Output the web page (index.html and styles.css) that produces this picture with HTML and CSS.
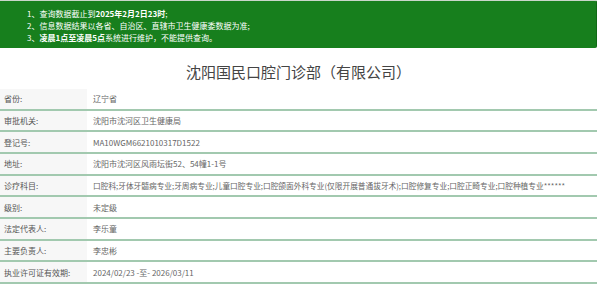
FILE: index.html
```html
<!DOCTYPE html>
<html lang="zh-CN">
<head>
<meta charset="utf-8">
<link rel="stylesheet" href="styles.css">
</head>
<body>
<div class="page">
  <div class="notice">
    <p>1、查询数据截止到<b>2025年2月2日23时</b>;</p>
    <p>2、信息数据结果以各省、自治区、直辖市卫生健康委数据为准;</p>
    <p>3、<b>凌晨1点至凌晨5点</b>系统进行维护，不能提供查询。</p>
  </div>
  <h1 class="title">沈阳国民口腔门诊部（有限公司）</h1>
  <div class="table">
    <div class="row"><div class="label">省份:</div><div class="value">辽宁省</div></div>
    <div class="row"><div class="label">审批机关:</div><div class="value">沈阳市沈河区卫生健康局</div></div>
    <div class="row"><div class="label">登记号:</div><div class="value">MA10WGM6621010317D1522</div></div>
    <div class="row"><div class="label">地址:</div><div class="value">沈阳市沈河区风雨坛街52、54幢1-1号</div></div>
    <div class="row"><div class="label">诊疗科目:</div><div class="value value-long">口腔科;牙体牙髓病专业;牙周病专业;儿童口腔专业;口腔颌面外科专业(仅限开展普通拔牙术);口腔修复专业;口腔正畸专业;口腔种植专业******</div></div>
    <div class="row"><div class="label">级别:</div><div class="value">未定级</div></div>
    <div class="row"><div class="label">法定代表人:</div><div class="value">李乐童</div></div>
    <div class="row"><div class="label">主要负责人:</div><div class="value">李忠彬</div></div>
    <div class="row"><div class="label">执业许可证有效期:</div><div class="value">2024/02/23 -至- 2026/03/11</div></div>
  </div>
</div>
</body>
</html>
```
FILE: styles.css
```css
html, body {
  margin: 0;
  padding: 0;
  background: #ffffff;
}
body {
  font-family: "Noto Sans CJK SC", "Noto Sans", sans-serif;
  color: #555;
}
.page {
  width: 597px;
}
.notice {
  background: #177f1d;
  border-top: 1px solid #c9d6c9;
  border-right: 1px solid #0f6a15;
  border-radius: 0 2px 2px 0;
  height: 48px;
  box-sizing: border-box;
  padding: 7px 0 0 27px;
  color: #ffffff;
}
.notice p {
  margin: 0;
  font-size: 8px;
  line-height: 12px;
  height: 12px;
  white-space: nowrap;
}
.notice b {
  font-weight: 700;
}
.title {
  margin: 0;
  height: 41px;
  box-sizing: border-box;
  padding-top: 14px;
  text-align: center;
  font-size: 15px;
  line-height: 20px;
  font-weight: 400;
  color: #444;
}
.table {
  display: flex;
  flex-direction: column;
}
.row {
  display: grid;
  grid-template-columns: 87px 1fr;
  height: 21.67px;
  box-sizing: border-box;
  border-bottom: 2px solid #a2c9af;
  font-size: 8px;
}
.label {
  background: #f7f7f7;
  padding-left: 4px;
  display: flex;
  align-items: center;
  color: #555;
}
.value {
  padding-left: 6px;
  display: flex;
  align-items: center;
  white-space: nowrap;
  color: #666;
}
.value-long {
  font-size: 7.7px;
}
```
